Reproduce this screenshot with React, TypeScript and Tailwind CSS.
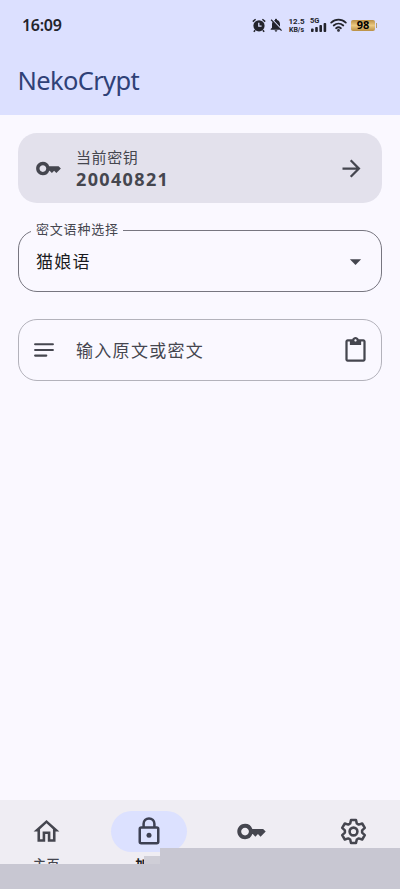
import type { ReactNode } from "react";
import {
    MdArrowDropDown,
    MdArrowForward,
    MdContentPaste,
    MdKey,
    MdNotificationsOff,
    MdOutlineHome
} from "react-icons/md";

interface NavItemProps {
    label : string
    icon : ReactNode
    isActive? : boolean
}

function AlarmIcon() {
    return (
        <svg width="14" height="15" viewBox="0 0 14 15" fill="none">
            <circle cx="7" cy="7.8" r="5.6" fill="#23242c" />
            <path d="M.8 3.6 3.6 1.2M13.2 3.6 10.4 1.2M3.2 12.2l-1.4 1.6M10.8 12.2l1.4 1.6" stroke="#23242c" strokeWidth="1.5" />
            <path d="M6.8 4.8v3.4h2.8" stroke="#dce0ff" strokeWidth="1.3" />
        </svg>
    )
}

function SignalIcon() {
    return (
        <svg width="16" height="9" viewBox="0 0 16 9" fill="#23242c">
            <rect x="0" y="5.5" width="2.6" height="3.5" rx=".8" />
            <rect x="4.2" y="4" width="2.6" height="5" rx=".8" />
            <rect x="8.4" y="2" width="2.6" height="7" rx=".8" />
            <rect x="12.6" y="0" width="2.6" height="9" rx=".8" />
        </svg>
    )
}

function WifiIcon() {
    return (
        <svg width="17" height="14" viewBox="0 0 17 14" fill="none" stroke="#23242c" strokeWidth="1.8" strokeLinecap="round">
            <path d="M1.2 4.6c4.2-4 10.4-4 14.6 0" />
            <path d="M3.7 7.5c2.8-2.5 6.8-2.5 9.6 0" />
            <path d="M6.1 10.2c1.4-1.1 3.4-1.1 4.8 0" />
            <circle cx="8.5" cy="12.4" r=".5" fill="#23242c" />
        </svg>
    )
}

function NotesIcon() {
    return (
        <svg width="20" height="14" viewBox="0 0 20 14" stroke="#45464f" strokeWidth="2.1" strokeLinecap="round">
            <path d="M1.1 1.2h17.8M1.1 7h17.8M1.1 12.6h11.2" />
        </svg>
    )
}

function LockIcon() {
    return (
        <svg className="-mt-px" width="22" height="28" viewBox="0 0 22 28" fill="none" stroke="#3d4053" strokeWidth="2.5">
            <rect x="1.75" y="10.5" width="18.5" height="15.7" rx="1.5" />
            <path d="M5.6 10.5V6.8a5.4 5.4 0 0 1 10.8 0v3.7" />
            <circle cx="11" cy="18.3" r="2.5" fill="#3d4053" stroke="none" />
        </svg>
    )
}

function GearIcon() {
    return (
        <svg className="-mt-px" width="27" height="27" viewBox="-13.5 -13.5 27 27" fill="none" stroke="#45464f" strokeWidth="2.5" strokeLinejoin="round">
            <path d="M-3.3-8-2.5-11.6H2.5L3.3-8 5.2-6.9 8.7-8 11.3-3.6 8.6-1.1V1.1L11.3 3.6 8.7 8 5.2 6.9 3.3 8 2.5 11.6H-2.5L-3.3 8-5.2 6.9-8.7 8-11.3 3.6-8.6 1.1V-1.1L-11.3-3.6-8.7-8-5.2-6.9Z" />
            <circle r="3.9" strokeWidth="2.6" />
        </svg>
    )
}

function StatusBar() {
    return (
        <div className="flex h-[50px] items-center pl-[22px] pr-[23px] text-[#23242c]">
            <span className="text-[16px] font-semibold leading-none tracking-[-0.3px]">16:09</span>
            <div className="ml-auto flex items-center">
                <AlarmIcon />
                <MdNotificationsOff className="ml-[2px]" size={16} />
                <div className="ml-[4px] flex w-[17px] flex-col items-center whitespace-nowrap font-[Roboto,sans-serif] font-bold">
                    <div className="text-[8px] leading-[9px]">12.5</div>
                    <div className="text-[7px] leading-[8px]">KB/s</div>
                </div>
                <div className="ml-[5px] w-[17px]">
                    <div className="font-[Roboto,sans-serif] text-[7.5px] font-bold leading-[6px]">5G</div>
                    <div className="-mt-px pl-px"><SignalIcon /></div>
                </div>
                <div className="ml-[3px]"><WifiIcon /></div>
                <div className="ml-[4px] flex h-[11px] w-[24px] items-center justify-center rounded-[2px] bg-linear-to-b from-[#b98f45] via-[#ecc980] to-[#b98f45] text-[11px] font-bold leading-none text-black">
                    <span className="-mt-px">98</span>
                </div>
                <div className="ml-px h-[5px] w-px bg-[#b59a68]" />
            </div>
        </div>
    )
}

function NavItem({ label, icon, isActive = false } : NavItemProps) {
    return (
        <div className="flex flex-1 flex-col items-center">
            <div className={`flex h-[41px] w-[76px] items-center justify-center rounded-full ${isActive ? 'bg-[#dce1ff]' : ''}`}>
                {icon}
            </div>
            <span className={`mt-[3px] text-[13px] leading-[18px] tracking-[0.6px] ${isActive ? 'font-bold text-[#1a1b21]' : 'font-medium text-[#45464f]'}`}>
                {label}
            </span>
        </div>
    )
}

export default function App() {
    return (
        <div className="relative flex h-[889px] w-[400px] flex-col overflow-hidden bg-[#faf8ff] font-['Noto_Sans','Noto_Sans_CJK_SC',sans-serif] text-[#45464f]">
            <header className="h-[115px] shrink-0 bg-[#dce0ff]">
                <StatusBar />
                <h1 className="pl-[17.5px] pt-[12px] text-[25.5px] font-normal leading-[36px] tracking-[-0.65px] text-[#2f4177]">NekoCrypt</h1>
            </header>

            <main className="flex flex-1 flex-col px-[18px] pt-[18px]">
                <section className="flex h-[70px] items-center rounded-[19px] bg-[#e3e1ec] pl-[17px] pr-[17px]">
                    <MdKey size={27} />
                    <div className="ml-[14px] pt-[2px]">
                        <div className="text-[15px] leading-[20px] tracking-[0.6px]">当前密钥</div>
                        <div className="text-[18px] font-bold leading-[24px] tracking-[1.35px]">20040821</div>
                    </div>
                    <MdArrowForward className="ml-auto" size={27} />
                </section>

                <section className="relative mt-[27px] flex h-[62px] items-center rounded-[19px] border border-[#777680] pl-[17px] pr-[12px]">
                    <span className="absolute -top-[12px] left-[12px] bg-[#faf8ff] pl-[5px] pr-[4px] text-[13px] leading-[20px] tracking-[0.8px]">密文语种选择</span>
                    <span className="pt-px text-[17px] tracking-[1.2px] text-[#1a1b21]">猫娘语</span>
                    <MdArrowDropDown className="ml-auto" size={27} />
                </section>

                <section className="mt-[27px] flex h-[62px] items-center rounded-[19px] border border-[#b3b2bb] pl-[15px] pr-[12px]">
                    <NotesIcon />
                    <span className="ml-[22px] pt-px text-[17px] tracking-[1.3px]">输入原文或密文</span>
                    <MdContentPaste className="ml-auto" size={27} />
                </section>
            </main>

            <nav className="flex h-[89px] shrink-0 gap-[9px] bg-[#efedf3] pt-[11px]">
                <NavItem label="主页" icon={<MdOutlineHome size={31} />} />
                <NavItem label="加密" icon={<LockIcon />} isActive />
                <NavItem label="密钥" icon={<MdKey size={31} />} />
                <NavItem label="设置" icon={<GearIcon />} />
            </nav>

            <div className="absolute bottom-0 left-0 h-[25px] w-[160px] bg-[#c8c7d2]" />
            <div className="absolute bottom-0 right-0 h-[41px] w-[240px] bg-[#c8c7d2]" />
            <div className="absolute bottom-[25px] left-[144px] h-[8px] w-[16px] bg-[#cfced7]" />
        </div>
    )
}
